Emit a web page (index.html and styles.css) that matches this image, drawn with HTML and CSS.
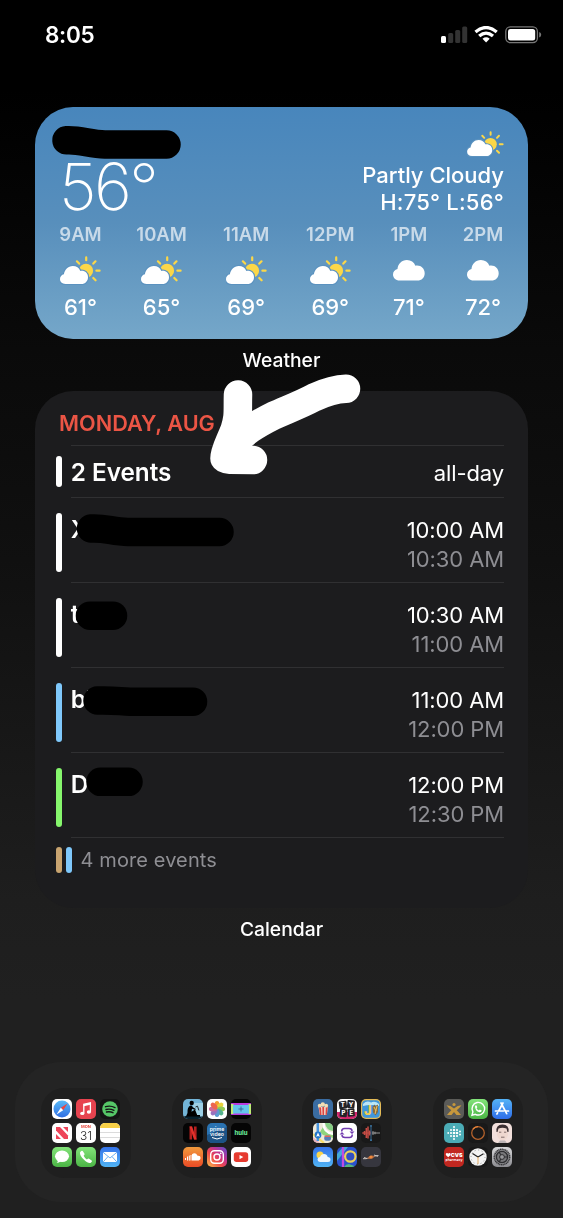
FILE: index.html
```html
<!DOCTYPE html>
<html lang="en">

<head>
  <meta charset="utf-8">
  <title>Home Screen</title>
  <link rel="stylesheet" href="styles.css">
</head>

<body>
  <svg width="0" height="0" class="defs">
    <defs>
      <symbol id="cloud" viewBox="0 0 32 21">
        <path fill="#fff" d="M6.500 20.600C2.800 20.600 0 18 0 14.600C0 11.800 1.900 9.700 4.500 9.100C4.900 4.200 8.600 0 13.900 0C18 0 21 2.100 22.400 5.700C27.500 4.700 31.700 8.300 31.700 13.200C31.700 17.400 28.700 20.600 24.300 20.600Z" />
      </symbol>
      <symbol id="partly" viewBox="0 0 41 29">
        <g stroke="#fbd748" stroke-width="2.200" stroke-linecap="round">
          <path d="M26.200 1.400V4.200M16.900 5.300l2.200 2.300M35.500 5.300l-2.200 2.300M36.400 14.700h3.200M33.300 22l2.300 2.300" />
        </g>
        <circle cx="26" cy="14.800" r="7.100" fill="#fbd748" />
        <path class="cut" d="M5.500 28C2 28 0 25.800 0 23.100C0 20.700 1.600 18.800 3.900 18.300C4.500 13.700 8 9.900 12.800 9.900C16.400 9.900 19.100 11.600 20.300 14.900C24.700 14.200 28 17 28 21.200C28 25.100 25.200 28 21.400 28Z" />
      </symbol>
      <linearGradient id="blue" x2="0" y2="1"><stop stop-color="#3573ea" /><stop offset="1" stop-color="#51b4f4" /></linearGradient>
      <linearGradient id="safari" x2="0" y2="1"><stop stop-color="#58b8f5" /><stop offset="1" stop-color="#2f6fe4" /></linearGradient>
      <linearGradient id="store" x2="0" y2="1"><stop stop-color="#55b3f6" /><stop offset="1" stop-color="#2f6ee9" /></linearGradient>
      <linearGradient id="green" x2="0" y2="1"><stop stop-color="#83e47a" /><stop offset="1" stop-color="#4bb445" /></linearGradient>
      <linearGradient id="orange" x2="0" y2="1"><stop stop-color="#f19a3c" /><stop offset="1" stop-color="#ea4b26" /></linearGradient>
      <linearGradient id="silver" x2="0" y2="1"><stop stop-color="#d8d8da" /><stop offset="1" stop-color="#8b8b90" /></linearGradient>
      <linearGradient id="insta" x1="0" y1="1" x2="1" y2="0"><stop stop-color="#fbc04d" /><stop offset=".4" stop-color="#ef4a4b" /><stop offset=".65" stop-color="#c13291" /><stop offset="1" stop-color="#594fd0" /></linearGradient>
    </defs>
  </svg>

  <div class="phone">
    <header class="status">
      <div class="clock">8:05</div>
      <svg width="101" height="18" viewBox="0 0 101 18">
        <rect x="0" y="10" width="5" height="7" rx="1.500" fill="#fff" />
        <g fill="#333">
          <rect x="7.200" y="7" width="5" height="10" rx="1.500" />
          <rect x="14.200" y="4" width="5" height="13" rx="1.500" />
          <rect x="21.200" y=".5" width="5" height="16.500" rx="1.500" />
        </g>
        <g fill="none" stroke="#fff" stroke-width="3.300">
          <path d="M34.500 6.100Q45 -3 55.700 6.100M38.200 10.100Q45 4.100 52 10.100" />
        </g>
        <path d="M41.500 12.800Q45.100 9.900 48.700 12.800L45.100 16.600Z" fill="#fff" />
        <rect x="64.800" y=".9" width="31.600" height="15.700" rx="4.500" fill="none" stroke="#777" stroke-width="1.300" />
        <rect x="67" y="3" width="27.200" height="11.500" rx="2.500" fill="#fff" />
        <path d="M98.200 6v5.600q2-.8 2-2.800t-2-2.800z" fill="#777" />
      </svg>
    </header>

    <section class="weather">
      <div class="now">
        <div class="temp">56°</div>
        <div class="summary">
          <svg class="icon-now" width="37" height="26"><use href="#partly" /></svg>
          <div class="condition">Partly Cloudy</div>
          <div class="range">H:75° L:56°</div>
        </div>
      </div>
      <div class="hours">
        <div class="hour"><span class="time">9AM</span><svg class="sun" width="41" height="29"><use href="#partly" /></svg><span class="deg">61°</span></div>
        <div class="hour"><span class="time">10AM</span><svg class="sun" width="41" height="29"><use href="#partly" /></svg><span class="deg">65°</span></div>
        <div class="hour"><span class="time">11AM</span><svg class="sun" width="41" height="29"><use href="#partly" /></svg><span class="deg">69°</span></div>
        <div class="hour"><span class="time">12PM</span><svg class="sun" width="41" height="29"><use href="#partly" /></svg><span class="deg">69°</span></div>
        <div class="hour"><span class="time">1PM</span><svg class="cloud" width="32" height="21"><use href="#cloud" /></svg><span class="deg">71°</span></div>
        <div class="hour"><span class="time">2PM</span><svg class="cloud" width="32" height="21"><use href="#cloud" /></svg><span class="deg">72°</span></div>
      </div>
    </section>
    <div class="label">Weather</div>

    <section class="calendar">
      <div class="date">MONDAY, AUG</div>
      <div class="event allday">
        <i class="bar"></i>
        <div class="body"><b>2 Events</b><div class="times"><span>all-day</span></div></div>
      </div>
      <div class="event">
        <i class="bar"></i>
        <div class="body"><b>X</b><div class="times"><span>10:00 AM</span><span class="end">10:30 AM</span></div></div>
      </div>
      <div class="event">
        <i class="bar"></i>
        <div class="body"><b>t</b><div class="times"><span>10:30 AM</span><span class="end">11:00 AM</span></div></div>
      </div>
      <div class="event">
        <i class="bar blue"></i>
        <div class="body"><b>bl</b><div class="times"><span>11:00 AM</span><span class="end">12:00 PM</span></div></div>
      </div>
      <div class="event">
        <i class="bar green"></i>
        <div class="body"><b>D</b><div class="times"><span>12:00 PM</span><span class="end">12:30 PM</span></div></div>
      </div>
      <div class="more"><i class="bar tan"></i><i class="bar blue"></i><span>4 more events</span></div>
    </section>
    <div class="label">Calendar</div>

    <nav class="dock">
      <div class="folder">
        <!-- Safari -->
        <svg viewBox="0 0 20 20"><rect width="20" height="20" fill="#fff" /><circle cx="10" cy="10" r="8.500" fill="url(#safari)" /><path d="M15.500 4.500L8.800 8.800l2.400 2.400z" fill="#f0443c" /><path d="M4.500 15.500l6.700-4.300-2.400-2.400z" fill="#fff" /></svg>
        <!-- Music -->
        <svg viewBox="0 0 20 20"><rect width="20" height="20" fill="#e7434f" /><path d="M7.800 14.200V5.300l6.600-1.500v9" fill="none" stroke="#fff" stroke-width="1.300" /><path d="M7.800 5.300l6.600-1.500v2l-6.600 1.500z" fill="#fff" /><ellipse cx="6.300" cy="14.400" rx="2.100" ry="1.700" fill="#fff" /><ellipse cx="12.900" cy="13" rx="2.100" ry="1.700" fill="#fff" /></svg>
        <!-- Spotify -->
        <svg viewBox="0 0 20 20"><rect width="20" height="20" fill="#141414" /><circle cx="10" cy="10" r="7.800" fill="#55c667" /><path d="M5.500 7.700q5-1.500 9.500.9M6 10.500q4-1.100 8 .8M6.500 13q3.500-.8 6.500.7" fill="none" stroke="#141414" stroke-width="1.400" stroke-linecap="round" /></svg>
        <!-- News -->
        <svg viewBox="0 0 20 20"><rect width="20" height="20" fill="#fff" /><path d="M4 4h4l8 8.500V16h-4L4 7.500z" fill="#ee4459" /><path d="M11 4h5v5zM4 11v5h5z" fill="#ee4459" /></svg>
        <!-- Calendar -->
        <svg viewBox="0 0 20 20"><rect width="20" height="20" fill="#fff" /><text x="10" y="5" class="cal-day">MON</text><text x="10" y="16.500" class="cal-num">31</text></svg>
        <!-- Notes -->
        <svg viewBox="0 0 20 20"><rect width="20" height="20" fill="#fff" /><rect width="20" height="5" fill="#f7cf46" /><path d="M0 9.500h20M0 14.500h20" stroke="#ccc" stroke-width=".7" /></svg>
        <!-- Messages -->
        <svg viewBox="0 0 20 20"><rect width="20" height="20" fill="url(#green)" /><ellipse cx="10" cy="9.300" rx="7" ry="5.800" fill="#fff" /><path d="M6 12.500q0 2.500-1.500 3.500 2.500 0 4.500-2z" fill="#fff" /></svg>
        <!-- Phone -->
        <svg viewBox="0 0 20 20"><rect width="20" height="20" fill="url(#green)" /><path d="M4 5.600Q5.300 3 6.700 4l1.800 2.700q.4.900-.9 2.100 1 2.200 3.300 3.600 1.400-1.200 2.200-.7l2.600 1.800q1 1.100-.9 2.300Q12.500 17 8 12.800 3.500 8.500 4 5.600z" fill="#fff" /></svg>
        <!-- Mail -->
        <svg viewBox="0 0 20 20"><rect width="20" height="20" fill="url(#blue)" /><rect x="3" y="5" width="14" height="10" rx="1.500" fill="#fff" /><path d="M3.300 5.500L10 11l6.700-5.500M3.500 14.600l4.500-5M16.500 14.600l-4.500-5" fill="none" stroke="#4a9ef0" stroke-width=".8" /></svg>
      </div>

      <div class="folder">
        <!-- Kindle -->
        <svg viewBox="0 0 20 20"><rect width="20" height="20" fill="#73b5d8" /><path d="M10 4h10v14H10z" fill="#9dd0e5" /><circle cx="8.700" cy="4" r="2.200" fill="#000" /><path d="M1 18Q4 17 4.500 14q-.5-6 3-7.500Q9 6 9.800 8.200l3 1.800-.6.900L9 9.700l-.5 3 3.500-2.200 2.200 5.500H17v2H1z" fill="#000" /><path d="M12.500 8l2-.8 1.400 4.200" stroke="#000" stroke-width=".8" fill="none" /><rect y="17.500" width="20" height="2.500" fill="#07212e" /></svg>
        <!-- Photos -->
        <svg viewBox="0 0 20 20"><rect width="20" height="20" fill="#fff" />
          <g class="petals"><ellipse cx="10" cy="5.900" rx="2.500" ry="4" fill="#f59d32" /><ellipse cx="10" cy="5.900" rx="2.500" ry="4" fill="#e8d13c" transform="rotate(45 10 10)" /><ellipse cx="10" cy="5.900" rx="2.500" ry="4" fill="#93c856" transform="rotate(90 10 10)" /><ellipse cx="10" cy="5.900" rx="2.500" ry="4" fill="#54b28d" transform="rotate(135 10 10)" /><ellipse cx="10" cy="5.900" rx="2.500" ry="4" fill="#5c9bd0" transform="rotate(180 10 10)" /><ellipse cx="10" cy="5.900" rx="2.500" ry="4" fill="#9a72bd" transform="rotate(225 10 10)" /><ellipse cx="10" cy="5.900" rx="2.500" ry="4" fill="#cf6a9b" transform="rotate(270 10 10)" /><ellipse cx="10" cy="5.900" rx="2.500" ry="4" fill="#ed6550" transform="rotate(315 10 10)" /></g></svg>
        <!-- Scanner -->
        <svg viewBox="0 0 20 20"><rect width="20" height="20" fill="#050505" /><rect y="4" width="20" height="12" fill="#b93bdc" /><path d="M0 5h2.500v10H0zM17.500 5H20v10h-2.500z" fill="#bdeb75" /><rect x="2" y="6" width="16" height="8.500" fill="#64c4ec" /><path d="M10 7.500v5M7.500 10h5" stroke="#34538b" stroke-width=".8" /></svg>
        <!-- Netflix -->
        <svg viewBox="0 0 20 20"><rect width="20" height="20" fill="#050505" /><path d="M6.500 3.500h2.600v13H6.500zM11 3.500h2.600v13H11z" fill="#b5201f" /><path d="M6.500 3.500h2.600l4.500 13H11z" fill="#e3312c" /></svg>
        <!-- Prime Video -->
        <svg viewBox="0 0 20 20"><rect width="20" height="20" fill="#2a72b0" /><path d="M0 12L20 4v16H0z" fill="#1c5385" /><text x="10" y="7.700" class="prime">prime</text><text x="10" y="12.600" class="prime">video</text><path d="M5 14.500q5 3 10 0" fill="none" stroke="#fff" stroke-width="1" /></svg>
        <!-- Hulu -->
        <svg viewBox="0 0 20 20"><rect width="20" height="20" fill="#050505" /><text x="10" y="12.300" class="hulu">hulu</text></svg>
        <!-- SoundCloud -->
        <svg viewBox="0 0 20 20"><rect width="20" height="20" fill="url(#orange)" /><path d="M9 13.400V7.200q3.500-2.300 5.600 1.600 3-.5 3 2.200 0 2-2 2.400z" fill="#fff" /><path d="M2.500 11v2M4.500 9.500v4M6.300 8.600v5M8 8v5.500" stroke="#fff" stroke-width="1" /></svg>
        <!-- Instagram -->
        <svg viewBox="0 0 20 20"><rect width="20" height="20" fill="url(#insta)" /><rect x="3.700" y="3.700" width="12.600" height="12.600" rx="3.700" fill="none" stroke="#fff" stroke-width="1.400" /><circle cx="10" cy="10" r="3" fill="none" stroke="#fff" stroke-width="1.400" /><circle cx="13.700" cy="6.300" r=".9" fill="#fff" /></svg>
        <!-- YouTube -->
        <svg viewBox="0 0 20 20"><rect width="20" height="20" fill="#fff" /><rect x="2.800" y="5.200" width="14.400" height="9.800" rx="2.700" fill="#e63a2f" /><path d="M8.500 7.900v4.300l3.800-2.150z" fill="#fff" /></svg>
      </div>

      <div class="folder">
        <!-- Popcorn -->
        <svg viewBox="0 0 20 20"><rect width="20" height="20" fill="#3a6ca1" /><path d="M5.500 8h9.500l-1.200 8H6.800z" fill="#f2d9cd" /><path d="M6 8h2l.5 8H7zM9.300 8h1.800v8H9.500zM12.800 8h2l-1 8h-1.300z" fill="#dc4540" /><g fill="#f3ddb3"><circle cx="6.700" cy="6.700" r="1.900" /><circle cx="9.800" cy="5.500" r="2.200" /><circle cx="13.200" cy="6.700" r="1.900" /></g></svg>
        <!-- Type -->
        <svg viewBox="0 0 20 20"><rect width="20" height="20" fill="#fff" /><path d="M0 13h20v7H0z" fill="#d5276d" /><g fill="#222327"><rect x="2" y="2" width="7.800" height="7.800" rx="1" transform="rotate(-7 6 6)" /><rect x="10.200" y="1.200" width="7.500" height="8" rx="1" transform="rotate(5 14 5)" /><rect x="2.800" y="10" width="7.200" height="8" rx="1" transform="rotate(5 6 14)" /><rect x="10.700" y="9.500" width="7" height="8" rx="1" transform="rotate(-4 14 14)" /></g><g class="tiles"><text x="5.800" y="8">T</text><text x="14" y="7.500">Y</text><text x="6.500" y="16.300">P</text><text x="14.300" y="16">E</text></g></svg>
        <!-- Journey -->
        <svg viewBox="0 0 20 20"><rect width="20" height="20" fill="#e4bb57" /><rect x="1.200" y="1.200" width="17.600" height="17.600" rx="4" fill="#3f97dc" /><path d="M2 5q4-4 8-1.500 4-2 8 1.500v2q-8-2-16 0z" fill="#bce7f6" /><text x="6.800" y="15.500" class="letter-j">J</text><path d="M11.500 8l2-2.500 1 1.500L17 5.500V13l-2.500 3.500-2.500-3z" fill="#876b45" /><path d="M13 8l2 4M16 7l-2 8" stroke="#edc55b" stroke-width="1" /></svg>
        <!-- Maps -->
        <svg viewBox="0 0 20 20"><rect width="20" height="20" fill="#eee9d9" /><path d="M12 0h8v8q-7-1-8-8z" fill="#86ce84" /><path d="M7 9l3-5q2 6 10 8v3l-10-3z" fill="#8fd57d" /><path d="M10.500 0q0 10 10 11" fill="none" stroke="#fff" stroke-width="2.200" /><path d="M0 11l11 9" stroke="#f7dc68" stroke-width="2.200" /><path d="M0 14l7 6H0z" fill="#e9b0bd" /><path d="M4.800 0v18" stroke="#4794de" stroke-width="2.500" /><circle cx="5" cy="12" r="3.400" fill="#2477cb" /><path d="M5 9.500l1.900 4.300L5 13l-1.900.8z" fill="#fff" /><rect x="11.200" y="12.800" width="6.800" height="5" rx="2" fill="#557eb7" /><path d="M11.700 13.300h5.800" stroke="#df635f" stroke-width="1.500" /></svg>
        <!-- Shuffle -->
        <svg viewBox="0 0 20 20"><rect width="20" height="20" fill="#fff" /><path d="M4.700 8.500Q4.700 5.500 7.500 5.500H12Q15 5.500 15 8M15.300 11.500Q15.300 14.500 12.500 14.500H8Q5 14.500 5 12" fill="none" stroke="#713bae" stroke-width="1.500" /><path d="M12.500 8.500h5L15 11zM2.500 11.500h5L5 9z" fill="#713bae" /></svg>
        <!-- Voice Memos -->
        <svg viewBox="0 0 20 20"><rect width="20" height="20" fill="#191919" /><path d="M1.500 10h1M3.500 8v4M5.300 5v10M7 3.500v12M8.700 7.500v5" stroke="#c64c45" stroke-width="1.500" /><path d="M1.500 10H10" stroke="#c64c45" stroke-width="1" /><path d="M11 10h8M12 8v4M14 8.700v2.600" stroke="#999" stroke-width="1" /><path d="M10 3v14" stroke="#3f82b5" stroke-width=".8" /><circle cx="10" cy="2.800" r=".9" fill="#3f82b5" /><circle cx="10" cy="17.200" r=".9" fill="#3f82b5" /></svg>
        <!-- Weather -->
        <svg viewBox="0 0 20 20"><rect width="20" height="20" fill="url(#blue)" /><circle cx="7" cy="8" r="3.500" fill="#fbd54b" /><path d="M7 15q-2.500-.3-2.500-2.500T7 10q1-3 4-3t3.700 3q2.800 0 2.800 2.500T15 15z" fill="#eff7fd" /></svg>
        <!-- Rings -->
        <svg viewBox="0 0 20 20"><rect width="20" height="20" fill="#2a52cd" /><path d="M0 7L6 0h5L0 14z" fill="#43a8d7" /><path d="M6 0v20" stroke="#c04be0" stroke-width="2.300" /><path d="M7 20q2-3 5-3l8 3z" fill="#56b67d" /><circle cx="13.300" cy="9.500" r="5.200" fill="#304fc3" stroke="#edd158" stroke-width="2.200" /></svg>
        <!-- Galaxy -->
        <svg viewBox="0 0 20 20"><rect width="20" height="20" fill="#36363e" /><path d="M2 11.700q3 .3 6-.7M12 9.500q3-.8 5.500-1M3 10.500l3 1M13 8l4 1.300" fill="none" stroke="#c9c3c0" stroke-width="1" /><path d="M6 11.500l2.500-2.500 3-.5 2.500 1-2.500 2-3 .5z" fill="#b0663d" /><circle cx="10" cy="10" r="1.600" fill="#f08a3c" /></svg>
      </div>

      <div class="folder">
        <!-- X -->
        <svg viewBox="0 0 20 20"><rect width="20" height="20" fill="#5b5b58" /><circle cx="10" cy="5.500" r="1.600" fill="#c7983c" /><path d="M2.500 6.200q4 0 7.500 3.300 3.500-3.300 7.500-3.300-2 2.800-4.800 5 2 1.800 4.300 4.800h-4.500L10 13l-2.500 3H3q2.200-3 4.300-4.800-2.800-2.200-4.800-5z" fill="#c7983c" /></svg>
        <!-- WhatsApp -->
        <svg viewBox="0 0 20 20"><rect width="20" height="20" fill="url(#green)" /><path d="M4 16.200l.9-3.300A6.300 6.300 0 1 1 7.400 15.300z" fill="none" stroke="#fff" stroke-width="1.400" /><path d="M7 7q1.200-1.700 1.800 0l.5 1.300-.8.900q.7 1.500 2.400 2.200l.9-1 2 1q-.2 2-2.300 1.800Q7 12.300 7 7z" fill="#fff" /></svg>
        <!-- App Store -->
        <svg viewBox="0 0 20 20"><rect width="20" height="20" fill="url(#store)" /><path d="M9 4l5.700 10.700M11 4L6.600 12M5.600 13.800l-.7 1.200M3.500 12h8M14 12h2.500" stroke="#fff" stroke-width="1.700" stroke-linecap="round" /></svg>
        <!-- Fitbit -->
        <svg viewBox="0 0 20 20"><rect width="20" height="20" fill="#4bacb6" /><g fill="#fff"><circle cx="10" cy="3.900" r="1" /><circle cx="10" cy="6.900" r="1.200" /><circle cx="10" cy="10" r="1.300" /><circle cx="10" cy="13.100" r="1.200" /><circle cx="10" cy="16.100" r="1" /><circle cx="7" cy="7" r="1" /><circle cx="7" cy="10" r="1.100" /><circle cx="7" cy="13" r="1" /><circle cx="13" cy="7" r="1.100" /><circle cx="13" cy="10" r="1.300" /><circle cx="13" cy="13" r="1.100" /><circle cx="4.200" cy="10" r=".9" /><circle cx="16" cy="8.500" r="1" /><circle cx="16" cy="11.500" r="1" /></g></svg>
        <!-- Ring -->
        <svg viewBox="0 0 20 20"><rect width="20" height="20" fill="#191919" /><circle cx="10" cy="10" r="6.300" fill="none" stroke="#b5622c" stroke-width="1.300" /><path d="M5 6q2-2.300 5-2.300" fill="none" stroke="#e6843a" stroke-width="1.200" /></svg>
        <!-- Portrait -->
        <svg viewBox="0 0 20 20"><rect width="20" height="20" fill="#f2dfdb" /><path d="M5 8q0-6 5.500-6T16 8v4q-1 5-5.500 5T5 12z" fill="#efd7cf" /><path d="M4.500 9Q3.500 1.500 10.500 1.500T16.500 9h-1l-1-3.500q-4-1.500-8 0l-1 3.500z" fill="#3b2e30" /><path d="M7 9.200h2.300M12 9.200h2.300M9 14.200h3.500" stroke="#655052" stroke-width=".8" /><path d="M6 20l2-2.500h5l2 2.500z" fill="#bcb4b5" /></svg>
        <!-- CVS -->
        <svg viewBox="0 0 20 20"><rect width="20" height="20" fill="#c12720" /><path d="M4.200 10.300L1.800 7.900q-.3-2 1.200-1.900.9 0 1.200.8.300-.8 1.200-.8 1.500-.1 1.200 1.900z" fill="#fff" /><text x="12.600" y="10" class="cvs">CVS</text><text x="10" y="14.200" class="pharmacy">pharmacy</text></svg>
        <!-- Clock -->
        <svg viewBox="0 0 20 20"><rect width="20" height="20" fill="#191919" /><circle cx="10" cy="10" r="8.700" fill="#f4f4f4" /><circle cx="10" cy="10" r="7" fill="none" stroke="#999" stroke-width="1" stroke-dasharray="1 2.660" /><path d="M10 10L4.500 6.500M10 10l5.500-3.200" stroke="#222" stroke-width="1.200" /><path d="M10 10v7" stroke="#e49a3e" stroke-width=".8" /></svg>
        <!-- Settings -->
        <svg viewBox="0 0 20 20"><rect width="20" height="20" fill="url(#silver)" /><circle cx="10" cy="10" r="7.700" fill="#8b8b8e" stroke="#353538" stroke-width="1.500" stroke-dasharray="1.200 .5" /><circle cx="10" cy="10" r="5.600" fill="#77777a" stroke="#2d2d30" stroke-width="1.300" /><path d="M10 10h6M10 10L7 4.800M10 10l-3 5.200" stroke="#2d2d30" stroke-width="1.200" /><circle cx="10" cy="10" r="2.400" fill="#99999c" stroke="#2d2d30" stroke-width="1" /></svg>
      </div>
    </nav>

    <svg class="marker" width="563" height="1218" viewBox="0 0 563 1218">
      <g stroke="#000" stroke-width="28.500">
        <path d="M66.500 140.300C80 139.500 90 144.200 105 144.500H166.500" />
        <path d="M91 528.500C105 527.500 113 532 128 532H219.500" />
        <path d="M90 615.700H113" />
        <path d="M97.500 700.500C115 700 120 701.500 130 701.700H193" />
        <path d="M100.500 781.800H128.500" />
      </g>
      <g stroke="#fff" stroke-width="28.500">
        <path d="M346 388.800C336 389 325 392.500 314 397.500C300 405 286 410 274 415.500C257 424 243 432 230 448" />
        <path d="M238 394.500C237.500 412 239 416 234.500 430C229 444 224.500 451 224.500 458.500Q225 459.500 230 459.800L253 460" />
      </g>
    </svg>
  </div>
</body>

</html>
```
FILE: styles.css
```css
* {
  box-sizing: border-box;
}

body {
  margin: 0;
  background: #000;
  color: #fff;
  font-family: Inter, "Liberation Sans", sans-serif;
}

svg {
  display: block;
}

.defs {
  position: absolute;
}

.phone {
  position: relative;
  width: 563px;
  height: 1218px;
  overflow: hidden;
  background: linear-gradient(#000 0, #000 90px, #0a0a0a 350px, #101010 560px, #1e1e1e 900px, #202020 1000px, #202020 100%);
}

.status {
  display: flex;
  justify-content: space-between;
  align-items: flex-start;
  height: 107px;
  padding: 26px 21px 0 45px;
}

.clock {
  font-size: 22.5px;
  font-weight: 600;
  line-height: 18px;
  letter-spacing: -0.3px;
}

.weather {
  width: 493px;
  height: 232px;
  margin-left: 35px;
  padding: 24px 24px 0;
  border-radius: 38px;
  background: linear-gradient(#4886bc, #588fbc 50%, #75a7c9);
}

.now {
  display: flex;
  justify-content: space-between;
  height: 94px;
}

.temp {
  padding-top: 23px;
  font-size: 65px;
  font-weight: 250;
  line-height: 66px;
  letter-spacing: -2.6px;
}

.summary {
  display: flex;
  flex-direction: column;
  align-items: flex-end;
  font-size: 22px;
  font-weight: 500;
  line-height: 27px;
}

.icon-now {
  margin-bottom: 5px;
}

.range {
  letter-spacing: 0.2px;
}

.cut {
  fill: #fff;
  stroke: #5b92bf;
  stroke-width: 2.4px;
  paint-order: stroke;
}

.hours {
  display: grid;
  grid-template-columns: 43px 52px 50px 51px 39px 42px;
  justify-content: space-between;
}

.hour {
  display: flex;
  flex-direction: column;
  align-items: center;
  white-space: nowrap;
}

.time {
  height: 31px;
  font-size: 18.5px;
  font-weight: 600;
  line-height: 18px;
  color: #c8dae9;
}

.cloud {
  margin: 4px 0;
}

.deg {
  margin-top: 10px;
  font-size: 22px;
  font-weight: 550;
  line-height: 24px;
}

.label {
  height: 52px;
  padding-top: 9px;
  text-align: center;
  font-size: 19.3px;
  font-weight: 500;
  line-height: 25px;
}

.calendar {
  width: 493px;
  height: 517px;
  margin-left: 35px;
  padding: 0 24px 0 20px;
  border-radius: 38px;
  background: #1c1c1e;
}

.date {
  height: 54px;
  padding: 20px 0 0 4px;
  font-size: 21.7px;
  font-weight: 600;
  line-height: 24px;
  color: #eb5545;
}

.event {
  display: flex;
  gap: 9px;
  height: 85px;
}

.bar {
  width: 6px;
  height: 59px;
  margin: 16px 0 0 0.7px;
  border-radius: 3px;
  background: #fff;
}

.blue {
  background: #7fc8fb;
}

.green {
  background: #86f66d;
}

.tan {
  background: #c8a470;
}

.body {
  flex: 1;
  display: flex;
  justify-content: space-between;
  padding-top: 18px;
  border-top: 1px solid #303032;
  font-size: 22px;
  line-height: 29px;
}

.body b {
  margin-top: -1px;
  font-size: 24.3px;
  font-weight: 600;
}

.allday {
  height: 52px;
}

.allday .bar {
  height: 31px;
  margin-top: 11px;
}

.allday .body {
  padding-top: 13px;
}

.times {
  display: flex;
  flex-direction: column;
  align-items: flex-end;
  letter-spacing: -0.1px;
}

.end {
  color: #8e8e93;
}

.more {
  display: flex;
  gap: 3.6px;
  font-size: 20px;
  line-height: 24px;
  letter-spacing: 0.1px;
  color: #8e8e93;
}

.more .bar {
  height: 26px;
  margin-top: 10px;
}

.more span {
  flex: 1;
  padding: 10px 0 0 10px;
  border-top: 1px solid #303032;
  margin-left: -5px;
}

.dock {
  display: flex;
  justify-content: space-between;
  width: 533px;
  height: 140px;
  margin: 102px 0 0 15px;
  padding: 26px 25px 0 26px;
  border-radius: 46px;
  background: #242424;
}

.folder {
  display: grid;
  grid-template-columns: repeat(3, 20px);
  grid-auto-rows: 20px;
  gap: 4px;
  width: 90px;
  height: 90px;
  padding: 11px;
  border-radius: 23px;
  background: #1f1f1f;
}

.folder svg {
  width: 20px;
  height: 20px;
  border-radius: 5px;
  overflow: hidden;
}

.folder text {
  text-anchor: middle;
  fill: #fff;
}

.folder .cal-day {
  font-size: 4px;
  font-weight: 700;
  fill: #e5473c;
}

.folder .cal-num {
  font-size: 12px;
  font-weight: 300;
  fill: #222;
}

.prime {
  font-size: 5.2px;
  font-weight: 600;
}

.folder .hulu {
  font-size: 6px;
  font-weight: 800;
  fill: #65e394;
}

.tiles {
  font-size: 6px;
  font-weight: 800;
}

.folder .letter-j {
  font-size: 13px;
  font-weight: 800;
  fill: #f0cd56;
}

.cvs {
  font-size: 5.4px;
  font-weight: 900;
}

.pharmacy {
  font-size: 3.5px;
  font-weight: 600;
}

.petals {
  mix-blend-mode: multiply;
}

.marker {
  position: absolute;
  top: 0;
  left: 0;
  fill: none;
  stroke-linecap: round;
  stroke-linejoin: round;
}
```
